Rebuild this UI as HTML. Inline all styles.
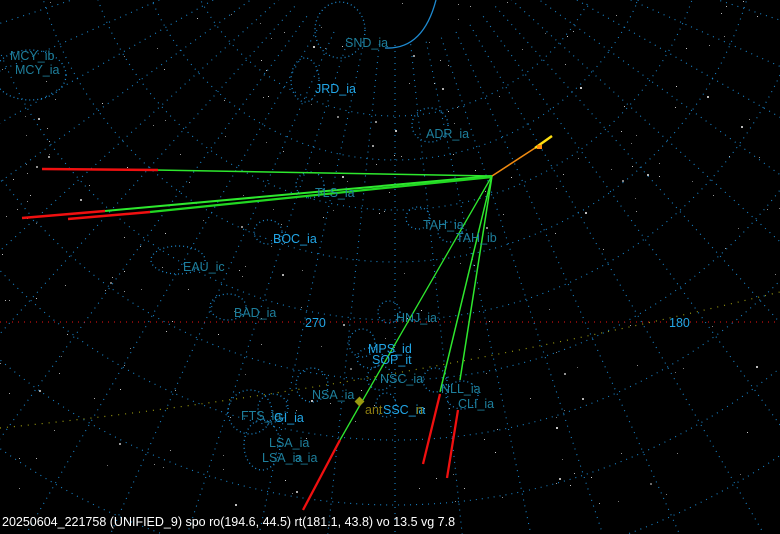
<!DOCTYPE html>
<html><head><meta charset="utf-8"><style>
html,body{margin:0;padding:0;background:#000;width:780px;height:534px;overflow:hidden}
svg{display:block;overflow:hidden;position:absolute;left:0;top:0}
text{font-family:"Liberation Sans","DejaVu Sans",sans-serif;font-size:12.5px}
.t{fill:#1e7f9c}.b{fill:#22a6e6}
.st{fill:none;stroke:#1c8ad0;stroke-width:1.3;stroke-dasharray:1 3}
</style></head><body>
<svg id="s" width="780" height="534" viewBox="0 0 780 534" xmlns="http://www.w3.org/2000/svg">
<g id="grid" fill="none" stroke="#1a86cc" stroke-width="1.1" stroke-dasharray="1 5"></g>
<g id="stars" fill="#cfcfcf"></g>
<path d="M385,48 Q423,50 436,0" fill="none" stroke="#1e8ad0" stroke-width="1.3"/>
<line x1="0" y1="322" x2="780" y2="322" stroke="#c01010" stroke-width="1.2" stroke-dasharray="1 5"/>
<path d="M0,428 Q380,390 780,292" fill="none" stroke="#9a9a10" stroke-width="1.2" stroke-dasharray="1 6"/>
<g class="st">
<ellipse cx="30" cy="75" rx="36" ry="25"/>
<ellipse cx="305" cy="80" rx="14" ry="22"/>
<ellipse cx="340" cy="30" rx="25" ry="28"/>
<ellipse cx="430" cy="125" rx="18" ry="17"/>
<ellipse cx="310" cy="185" rx="14" ry="13"/>
<ellipse cx="268" cy="232" rx="14" ry="12"/>
<ellipse cx="178" cy="260" rx="27" ry="14"/>
<ellipse cx="228" cy="307" rx="18" ry="13"/>
<ellipse cx="418" cy="218" rx="12" ry="11"/>
<ellipse cx="450" cy="232" rx="12" ry="10"/>
<ellipse cx="389" cy="312" rx="11" ry="11"/>
<ellipse cx="362" cy="343" rx="13" ry="14"/>
<ellipse cx="370" cy="358" rx="13" ry="10"/>
<ellipse cx="380" cy="378" rx="13" ry="12"/>
<ellipse cx="312" cy="385" rx="16" ry="17"/>
<ellipse cx="386" cy="405" rx="10" ry="12"/>
<ellipse cx="435" cy="380" rx="12" ry="12"/>
<ellipse cx="462" cy="395" rx="16" ry="14"/>
<ellipse cx="250" cy="412" rx="22" ry="22"/>
<ellipse cx="273" cy="408" rx="15" ry="14"/>
<ellipse cx="262" cy="445" rx="18" ry="25"/>
</g>
<g stroke-width="2">
<line x1="155" y1="170" x2="492" y2="176" stroke="#2ee82e" stroke-width="1.5"/>
<line x1="42" y1="169" x2="158" y2="170" stroke="#f01010" stroke-width="2.5"/>
<line x1="105" y1="211" x2="492" y2="176" stroke="#2ee82e"/>
<line x1="22" y1="218" x2="105" y2="211" stroke="#f01010" stroke-width="2.5"/>
<line x1="150" y1="212" x2="492" y2="177" stroke="#22d822" stroke-width="2.3"/>
<line x1="68" y1="219" x2="150" y2="212" stroke="#f01010" stroke-width="2.5"/>
<line x1="492" y1="176" x2="360" y2="405" stroke="#2ee82e" stroke-width="1.3"/>
<line x1="340" y1="440" x2="303" y2="510" stroke="#f01010" stroke-width="2.3"/>
<line x1="360" y1="405" x2="340" y2="440" stroke="#2ee82e" stroke-width="1.3"/>
<line x1="492" y1="176" x2="440" y2="392" stroke="#2ee82e" stroke-width="1.5"/>
<line x1="440" y1="394" x2="423" y2="464" stroke="#f01010" stroke-width="2.3"/>
<line x1="492" y1="176" x2="460" y2="380" stroke="#2ee82e" stroke-width="1.5"/>
<line x1="458" y1="410" x2="447" y2="478" stroke="#f01010" stroke-width="2.3"/>
<line x1="492" y1="176" x2="535" y2="148" stroke="#f08a10" stroke-width="1.5"/>
<line x1="535" y1="148" x2="552" y2="136" stroke="#ffe010" stroke-width="2.5"/>
<rect x="537" y="145" width="5" height="4" fill="#ff8a10"/>
</g>
<rect x="356" y="398" width="7" height="7" fill="#9a9a10" transform="rotate(45 359.5 401.5)"/>
<text x="10" y="60" class="t">MCY_ib</text>
<text x="15" y="74" class="t">MCY_ia</text>
<text x="345" y="47" class="t">SND_ia</text>
<text x="315" y="93" class="b">JRD_ia</text>
<text x="426" y="138" class="t">ADR_ia</text>
<text x="315" y="197" class="t">TLS_ia</text>
<text x="423" y="229" class="t">TAH_ia</text>
<text x="456" y="242" class="t">TAH_ib</text>
<text x="273" y="243" class="b">BOC_ia</text>
<text x="183" y="271" class="t">EAU_ic</text>
<text x="234" y="317" class="t">BAD_ia</text>
<text x="305" y="327" class="b">270</text>
<text x="669" y="327" class="b">180</text>
<text x="396" y="322" class="t">HNJ_ia</text>
<text x="368" y="353" class="b">MPS_id</text>
<text x="372" y="364" class="b">SOP_it</text>
<text x="380" y="383" class="t">NSC_ia</text>
<text x="312" y="399" class="t">NSA_ia</text>
<text x="441" y="393" class="t">NLL_ia</text>
<text x="458" y="408" class="t">CLI_ia</text>
<text x="365" y="414" fill="#8a7a10">ant</text>
<text x="383" y="414" class="b">SSC_ia</text>
<text x="416" y="414" fill="#8a7a10">n</text>
<text x="241" y="420" class="t">FTS_ia</text>
<text x="274" y="422" class="b">GI_ia</text>
<text x="269" y="447" class="t">LSA_ia</text>
<text x="262" y="462" class="t">LSA_ia</text>
<text x="295" y="462" class="t">ɜ_ia</text>
<text x="2" y="526" fill="#ffffff">20250604_221758 (UNIFIED_9) spo ro(194.6, 44.5) rt(181.1, 43.8) vo 13.5 vg 7.8</text>
</svg>
<script>
(function(){
var ns="http://www.w3.org/2000/svg",g=document.getElementById("grid");
var cx=395,cy=-105;
[221,265,315,367,425,485,545,610,680].forEach(function(r){
 var c=document.createElementNS(ns,"circle");c.setAttribute("cx",cx);c.setAttribute("cy",cy);c.setAttribute("r",r);g.appendChild(c);});
for(var a=-84;a<=84;a+=6){var t=a*Math.PI/180;
 var l=document.createElementNS(ns,"line");
 l.setAttribute("x1",cx+Math.sin(t)*150);l.setAttribute("y1",cy+Math.cos(t)*150);
 l.setAttribute("x2",cx+Math.sin(t)*1000);l.setAttribute("y2",cy+Math.cos(t)*1000);g.appendChild(l);}
var s=12345;function r(){s=(s*16807)%2147483647;return s/2147483647;}
var st=document.getElementById("stars");
for(var i=0;i<260;i++){var e=document.createElementNS(ns,"rect");var z=r()<0.15?2:1;
 e.setAttribute("x",Math.floor(r()*780));e.setAttribute("y",Math.floor(r()*510));
 e.setAttribute("width",z);e.setAttribute("height",z);e.setAttribute("opacity",0.5+r()*0.5);st.appendChild(e);}
})();
</script>
</body></html>
